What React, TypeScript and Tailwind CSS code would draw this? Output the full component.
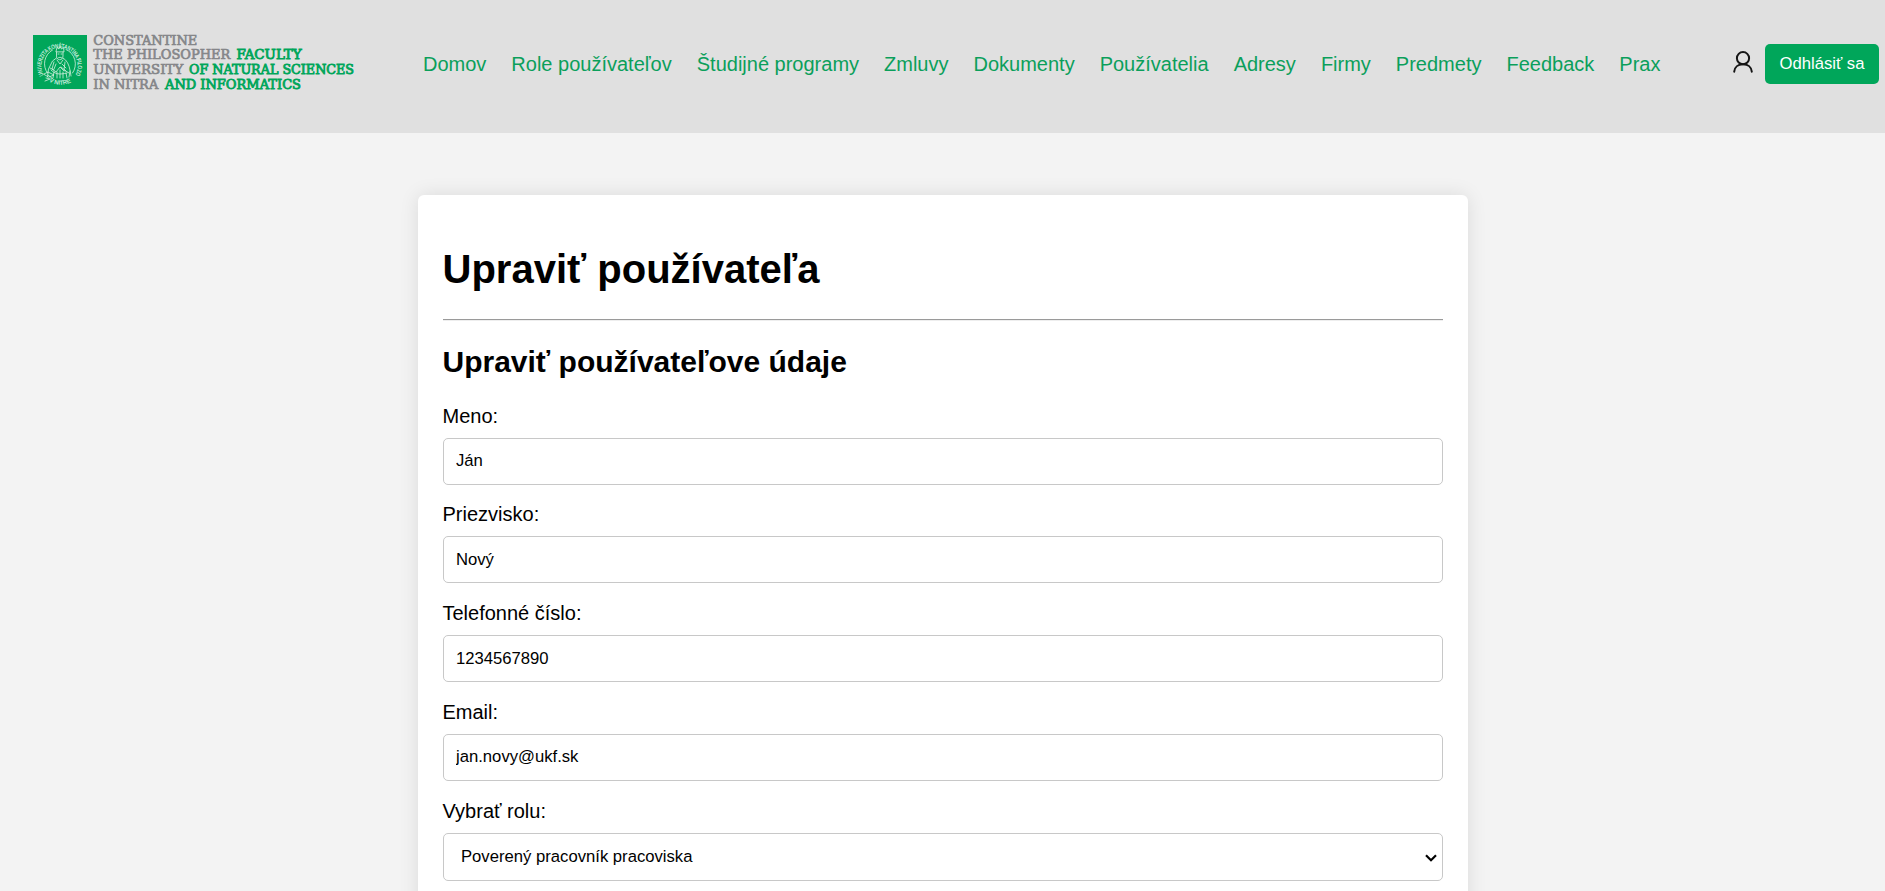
import React from 'react';

const navItems = [
  'Domov',
  'Role používateľov',
  'Študijné programy',
  'Zmluvy',
  'Dokumenty',
  'Používatelia',
  'Adresy',
  'Firmy',
  'Predmety',
  'Feedback',
  'Prax',
];

const fields = [
  { label: 'Meno:', value: 'Ján', pad: 'pb-[2px]' },
  { label: 'Priezvisko:', value: 'Nový', pad: 'pb-0' },
  { label: 'Telefonné číslo:', value: '1234567890', pad: 'pb-0' },
  { label: 'Email:', value: 'jan.novy@ukf.sk', pad: 'pb-[2px]' },
];

const logoText = [
  { t: 'CONSTANTINE', x: 60.3, y: 10.8, w: 104, green: false },
  { t: 'THE PHILOSOPHER', x: 60.3, y: 25.3, w: 137, green: false },
  { t: 'FACULTY', x: 203.5, y: 25.3, w: 65, green: true },
  { t: 'UNIVERSITY', x: 60.3, y: 40, w: 90, green: false },
  { t: 'OF NATURAL SCIENCES', x: 156, y: 40, w: 165, green: true },
  { t: 'IN NITRA', x: 60.3, y: 54.6, w: 65, green: false },
  { t: 'AND INFORMATICS', x: 132, y: 54.6, w: 136, green: true },
];

function Logo() {
  return (
    <svg width="324" height="58" viewBox="0 0 324 58" className="shrink-0 overflow-visible">
      <rect x="0" y="1" width="54" height="54" fill="#00a65a" />
      <g fill="none" stroke="#d5f0e0" strokeWidth="0.8" strokeLinecap="round" strokeLinejoin="round">
        <path d="M14.500 39A15.500 15.500 0 0 1 19.500 16M33 15.500A15.500 15.500 0 0 1 39.500 39" />
        <path d="M23 17.500l1-4 2 1.500 1-3 1.500 3 2-1.500.5 4zM23.500 18v4c0 5 6.500 5 6.500 0v-4M25 20h1m2 0h1M25 24c1-1 3-1 4 0" />
        <path d="M23.500 24l-4 3-4 8-1 8M30 24c4 2 6 7 7 12l1 6M24 26l3 4 3-4M21 28l-2 7 4 3 4-5 4 4M32 28l-1 8 5 3M18 36c4 4 8 5 16 3M21 38l-1 6M24 38v6M27 36v8M30 38v6M33 39l1 5M37 37l-1 6" />
        <path d="M11 40l4-2 6 3-5 2zM13 44l4 1-5 2M15 41l5 4M17 34l4 2M23 30l-2 5M29 30l4 4M28 33l5 4" />
      </g>
      <defs>
        <path id="sealTop" d="M10.500 41A18.300 18.300 0 1 1 42.500 41" />
        <path id="sealBottom" d="M16 47.500A22.500 22.500 0 0 0 39 47.500" />
      </defs>
      <g fill="#d5f0e0" stroke="#d5f0e0" strokeWidth="0.15" fontFamily="Liberation Sans, sans-serif" fontSize="5.8">
        <text>
          <textPath href="#sealTop" textLength="81" lengthAdjust="spacingAndGlyphs">
            UNIVERZITA KONŠTANTÍNA FILOZOFA
          </textPath>
        </text>
        <text>
          <textPath href="#sealBottom">V NITRE</textPath>
        </text>
      </g>
      <g fontFamily="DejaVu Serif, serif" fontSize="13.6">
        {logoText.map((l) => (
          <text
            key={l.t}
            x={l.x}
            y={l.y}
            textLength={l.w}
            lengthAdjust="spacingAndGlyphs"
            fill={l.green ? '#00a65a' : '#858689'}
            stroke={l.green ? '#00a65a' : '#858689'}
            strokeWidth={l.green ? 0.9 : 0.7}
          >
            {l.t}
          </text>
        ))}
      </g>
    </svg>
  );
}

export default function App() {
  return (
    <div className="h-[891px] overflow-hidden bg-[#f3f3f3] font-['Liberation_Sans',Arial,sans-serif] text-[20px] leading-[23px] text-black">
      <header className="flex h-[133px] items-start bg-[#e0e0e0] pl-[33px] pr-[6px]">
        <div className="mt-[34px] flex w-[390px]">
          <Logo />
        </div>
        <nav className="mt-[53px] flex gap-[25px] whitespace-nowrap text-[#0b9f5b]">
          {navItems.map((n) => (
            <a key={n} href="#">
              {n}
            </a>
          ))}
        </nav>
        <div className="ml-auto mt-[44px] flex items-start">
          <svg
            width="20"
            height="22"
            viewBox="0 0 20 22"
            fill="none"
            stroke="#151515"
            strokeWidth="2"
            strokeLinecap="round"
            className="mr-[12px] mt-[7px]"
          >
            <circle cx="10" cy="7.200" r="6.100" />
            <path d="M1.200 20.700C1.600 16 5.200 13.300 10 13.300s8.400 2.700 8.800 7.400" />
          </svg>
          <button className="h-[40px] w-[114px] rounded-[5px] bg-[#00a65a] pb-[2px] text-[16.667px] leading-[19px] text-white">
            Odhlásiť sa
          </button>
        </div>
      </header>

      <main className="mx-auto mt-[62px] w-[1050px] rounded-[6px] bg-white px-[25px] pt-[51px] pb-[60px] shadow-[0_0_19px_rgba(0,0,0,0.1)]">
        <h1 className="text-[40px] font-bold leading-[46px]">Upraviť používateľa</h1>
        <hr className="mt-[27px] h-[2px] border-t border-b border-t-[#9a9a9a] border-b-[#eeeeee]" />
        <h2 className="mt-[23px] mb-[26px] text-[30px] font-bold leading-[35px]">Upraviť používateľove údaje</h2>
        <form className="flex flex-col">
          {fields.map((f) => (
            <div key={f.label} className="flex h-[99px] flex-col first:h-[98px]">
              <label className="mb-[10px]">{f.label}</label>
              <input
                defaultValue={f.value}
                className={`h-[47px] w-full rounded-[5px] border border-[#c8c8c8] bg-white px-[12.5px] text-[16.667px] leading-[19px] ${f.pad}`}
              />
            </div>
          ))}
          <div className="flex flex-col">
            <label className="mb-[10px]">Vybrať rolu:</label>
            <div className="flex h-[48px] items-center justify-between rounded-[5px] border border-[#c8c8c8] pl-[17.5px] pr-[5px] text-[16.667px] leading-[19px]">
              <span className="pb-[1px]">Poverený pracovník pracoviska</span>
              <svg width="12" height="8" viewBox="0 0 12 8" fill="none" stroke="#000" strokeWidth="2.200" className="mt-[2px]">
                <path d="M1 1.300l5 5 5-5" />
              </svg>
            </div>
          </div>
        </form>
      </main>
    </div>
  );
}
